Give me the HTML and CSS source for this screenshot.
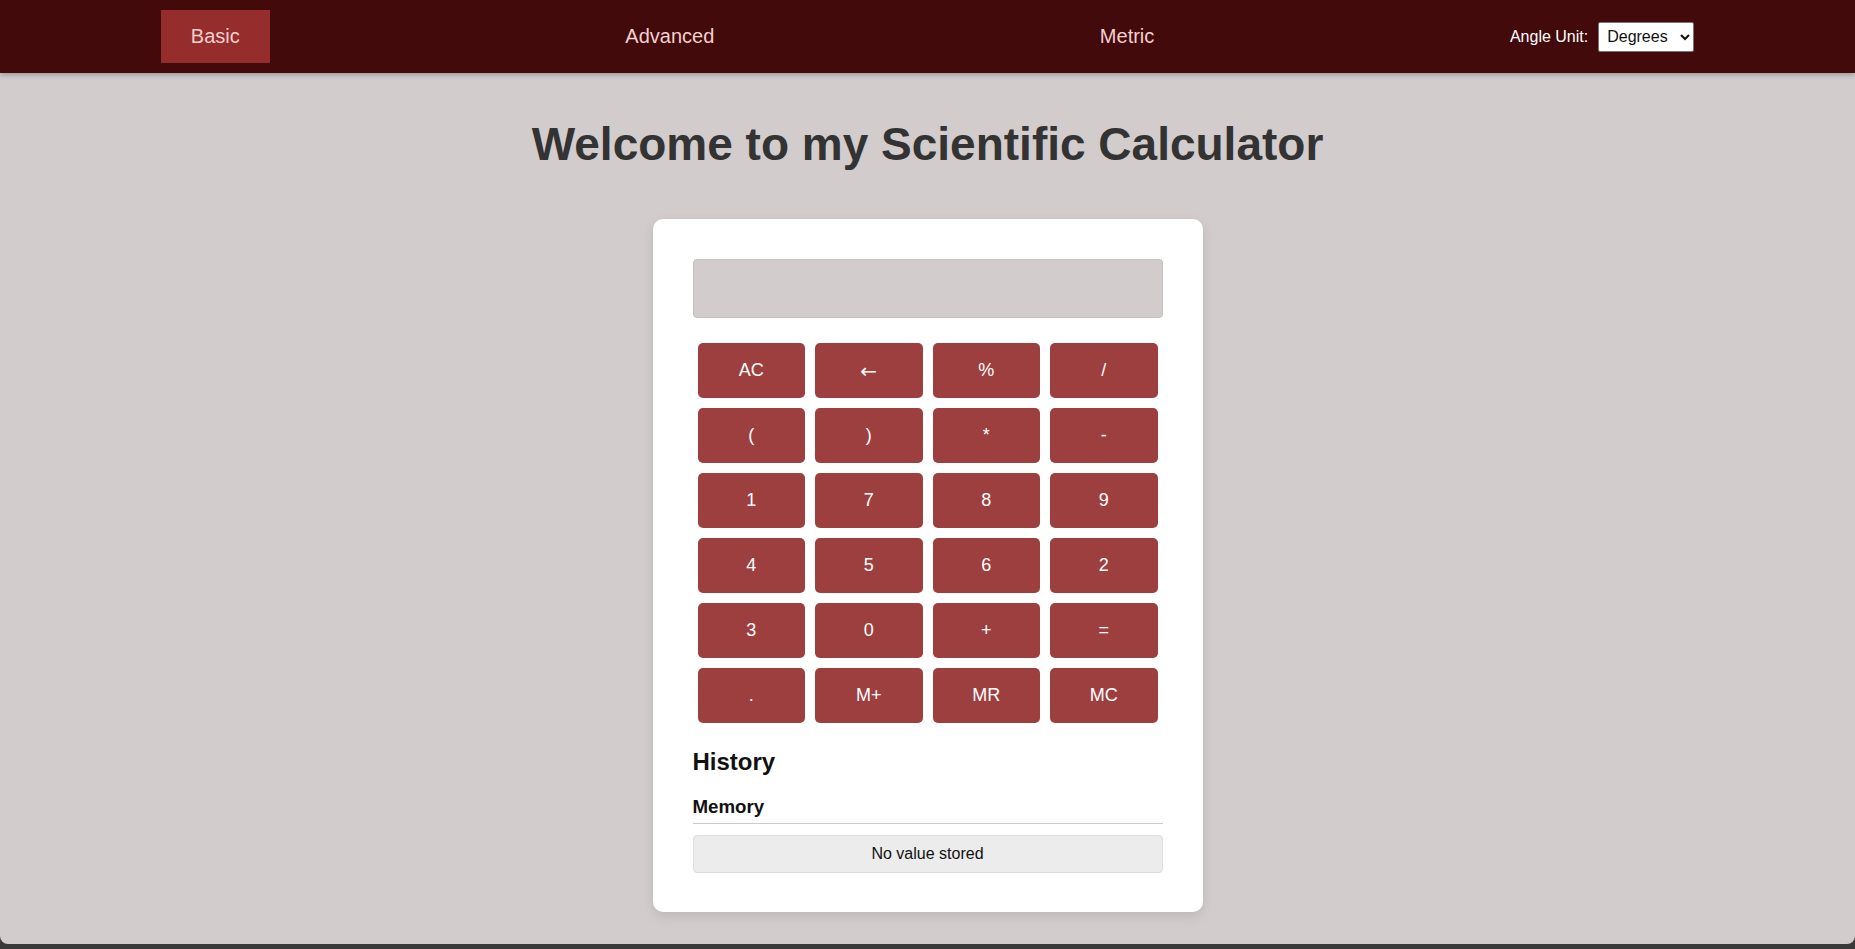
FILE: index.html
```html
<!DOCTYPE html>
<html lang="en">
<head>
<meta charset="utf-8">
<title>Scientific Calculator</title>
<link rel="stylesheet" href="styles.css">
</head>
<body>
<div class="page">
  <nav class="navbar">
    <a class="nav-link active" href="#">Basic</a>
    <a class="nav-link" href="#">Advanced</a>
    <a class="nav-link" href="#">Metric</a>
    <div class="angle">
      <label class="angle-label" for="angle">Angle Unit:</label>
      <select id="angle" class="angle-select">
        <option>Degrees</option>
        <option>Radians</option>
      </select>
    </div>
  </nav>

  <h1 class="title">Welcome to my Scientific Calculator</h1>

  <main class="card">
    <div class="display"></div>
    <div class="keys">
      <button class="key">AC</button>
      <button class="key key-arrow">←</button>
      <button class="key">%</button>
      <button class="key">/</button>
      <button class="key">(</button>
      <button class="key">)</button>
      <button class="key">*</button>
      <button class="key">-</button>
      <button class="key">1</button>
      <button class="key">7</button>
      <button class="key">8</button>
      <button class="key">9</button>
      <button class="key">4</button>
      <button class="key">5</button>
      <button class="key">6</button>
      <button class="key">2</button>
      <button class="key">3</button>
      <button class="key">0</button>
      <button class="key">+</button>
      <button class="key">=</button>
      <button class="key">.</button>
      <button class="key">M+</button>
      <button class="key">MR</button>
      <button class="key">MC</button>
    </div>
    <h2 class="history-title">History</h2>
    <h3 class="memory-title">Memory</h3>
    <div class="memory-box">No value stored</div>
  </main>
</div>
</body>
</html>
```

FILE: styles.css
```css
html {
  background: #3a3a3a;
}
body {
  margin: 0;
  font-family: "Liberation Sans", Arial, sans-serif;
}
.page {
  min-height: 944px;
  background: #d2cccc;
  border-radius: 0 0 8px 8px;
  overflow: hidden;
}
.navbar {
  display: flex;
  justify-content: space-around;
  align-items: center;
  background: #420a0a;
  padding: 10px 0;
  box-shadow: 0 2px 5px rgba(0, 0, 0, 0.25);
}
.nav-link {
  display: block;
  padding: 15px 30px;
  font-size: 20px;
  line-height: 23px;
  color: #f3cfcf;
  text-decoration: none;
}
.nav-link.active {
  background: #962d2d;
  margin-left: -2px;
}
.angle {
  display: flex;
  align-items: center;
  gap: 10px;
  margin-right: -2px;
}
.angle-label {
  color: #ffffff;
  font-size: 16px;
}
.angle-select {
  font-family: "Liberation Sans", Arial, sans-serif;
  font-size: 16px;
  height: 30px;
  width: 96px;
  padding: 2px 4px;
  background: #ffffff;
  color: #111;
  border: 1px solid #767676;
  border-radius: 2px;
}
.title {
  margin: 44px 0 48px;
  text-align: center;
  font-size: 46px;
  color: #333333;
}
.card {
  width: 470px;
  margin: 0 auto;
  padding: 40px 40px 39px;
  background: #ffffff;
  border-radius: 10px;
  box-shadow: 0 4px 12px rgba(0, 0, 0, 0.1);
}
.display {
  height: 57px;
  background: #d2cccc;
  border: 1px solid #c5bfbf;
  border-radius: 4px;
  margin-bottom: 20px;
}
.keys {
  display: grid;
  grid-template-columns: repeat(4, 1fr);
}
.key {
  margin: 5px;
  height: 55px;
  border: none;
  border-radius: 5px;
  background: #9e3f3f;
  color: #ffffff;
  font-family: "Liberation Sans", Arial, sans-serif;
  font-size: 18px;
}
.key-arrow {
  font-family: "DejaVu Sans", sans-serif;
  font-size: 20px;
}
.history-title {
  font-size: 24px;
  margin: 20px 0;
  color: #111;
}
.memory-title {
  font-size: 18.72px;
  margin: 19px 0 11px;
  padding-bottom: 5px;
  border-bottom: 1px solid #cccccc;
  color: #111;
}
.memory-box {
  padding: 9px;
  text-align: center;
  font-size: 16px;
  background: #ececec;
  border: 1px solid #dddddd;
  border-radius: 4px;
  color: #111;
}
```
